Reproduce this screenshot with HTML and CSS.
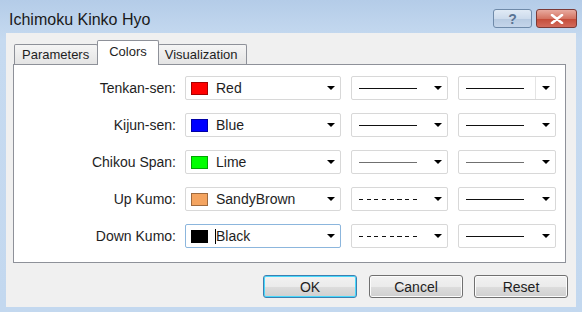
FILE: index.html
```html
<!DOCTYPE html>
<html lang="en">
<head>
  <meta charset="UTF-8">
  <title>Ichimoku Kinko Hyo</title>
  <link rel="stylesheet" href="styles.css">
</head>
<body>
  <div class="window">
    <div class="titlebar">
      <span class="title">Ichimoku Kinko Hyo</span>
      <div class="caption-btns">
        <span class="cap-btn help">?</span>
        <span class="cap-btn close">
          <svg width="14" height="10" viewBox="0 0 14 10"><path d="M2 1 L12 9 M12 1 L2 9" stroke="#fff" stroke-width="2.6" stroke-linecap="round"/></svg>
        </span>
      </div>
    </div>

    <div class="client">
      <div class="tabs">
        <div class="tab">Parameters</div>
        <div class="tab active">Colors</div>
        <div class="tab">Visualization</div>
      </div>

      <div class="panel">
        <div class="row">
          <label>Tenkan-sen:</label>
          <div class="combo"><span class="swatch red"></span><span class="name">Red</span><span class="arrow"></span></div>
          <div class="combo"><span class="line"></span><span class="arrow"></span></div>
          <div class="combo"><span class="line"></span><span class="arrow split"></span></div>
        </div>
        <div class="row">
          <label>Kijun-sen:</label>
          <div class="combo"><span class="swatch blue"></span><span class="name">Blue</span><span class="arrow"></span></div>
          <div class="combo"><span class="line"></span><span class="arrow"></span></div>
          <div class="combo"><span class="line"></span><span class="arrow"></span></div>
        </div>
        <div class="row">
          <label>Chikou Span:</label>
          <div class="combo"><span class="swatch lime"></span><span class="name">Lime</span><span class="arrow"></span></div>
          <div class="combo"><span class="line grey"></span><span class="arrow"></span></div>
          <div class="combo"><span class="line grey"></span><span class="arrow"></span></div>
        </div>
        <div class="row">
          <label>Up Kumo:</label>
          <div class="combo"><span class="swatch sandy"></span><span class="name">SandyBrown</span><span class="arrow"></span></div>
          <div class="combo"><span class="line dashed"></span><span class="arrow"></span></div>
          <div class="combo"><span class="line"></span><span class="arrow"></span></div>
        </div>
        <div class="row">
          <label>Down Kumo:</label>
          <div class="combo focused"><span class="swatch black"></span><span class="name"><span class="caret"></span>Black</span><span class="arrow"></span></div>
          <div class="combo"><span class="line dashed"></span><span class="arrow"></span></div>
          <div class="combo"><span class="line"></span><span class="arrow"></span></div>
        </div>
      </div>

      <div class="buttons">
        <button class="btn default">OK</button>
        <button class="btn">Cancel</button>
        <button class="btn">Reset</button>
      </div>
    </div>
  </div>
</body>
</html>
```

FILE: styles.css
```css
body {
  margin: 0;
  font-family: "Liberation Sans", Arial, sans-serif;
  font-size: 14px;
  color: #1e1e1e;
}

.window {
  width: 582px;
  height: 312px;
  box-sizing: border-box;
  padding: 0 6px 5px 6px;
  background: linear-gradient(#b4cce8, #c6daf0 40px, #c3d8ef);
}

.titlebar {
  height: 33px;
  display: flex;
  align-items: flex-start;
  justify-content: space-between;
}

.title {
  margin: 11px 0 0 3px;
  font-size: 16px;
  color: #1a1a1a;
}

.caption-btns {
  display: flex;
  gap: 4px;
  margin: 9px -1px 0 0;
}

.cap-btn {
  height: 19px;
  box-sizing: border-box;
  border: 1px solid #6f8aa9;
  border-radius: 3px;
  display: flex;
  align-items: center;
  justify-content: center;
}

.help {
  width: 39px;
  background: linear-gradient(#e0eaf5, #cddbec 50%, #b7cae1 51%, #c4d5ea);
  color: #5a7494;
  font-weight: bold;
  font-size: 14px;
}

.close {
  width: 41px;
  border-color: #7c3a36;
  background: linear-gradient(#e8aa9f, #d47462 50%, #c44b37 51%, #d36b5c);
}

.client {
  height: 274px;
  box-sizing: border-box;
  background: #f0f0f0;
  padding: 7px 8px 9px 7px;
}

.tabs {
  display: flex;
  align-items: flex-end;
  height: 24px;
  padding-left: 1px;
  font-size: 13px;
}

.tab {
  height: 20px;
  box-sizing: border-box;
  padding: 2px 8px 0 7px;
  border: 1px solid #8e9199;
  border-bottom: none;
  border-radius: 2px 2px 0 0;
  background: linear-gradient(#f5f5f5, #e4e4e4);
  color: #1e1e1e;
}

.tab + .tab {
  border-left: none;
}

.tab.active {
  height: 25px;
  margin: 0 -1px -1px -1px;
  padding: 3px 11px 0 11px;
  background: #fff;
  border-left: 1px solid #8e9199;
  position: relative;
}

.tab.active + .tab {
  border-left: none;
}

.panel {
  width: 553px;
  height: 199px;
  box-sizing: border-box;
  background: #fff;
  border: 1px solid #8e9199;
  padding: 11px 0 0 0;
  display: grid;
  grid-auto-rows: 24px;
  row-gap: 13px;
}

.row {
  display: grid;
  grid-template-columns: 161px 156px 97px 98px;
  column-gap: 10px;
  align-items: center;
}

.row label {
  text-align: right;
  margin-right: -1px;
}

.combo {
  height: 24px;
  box-sizing: border-box;
  border: 1px solid #d8d8d8;
  border-radius: 2px;
  display: flex;
  align-items: center;
  padding: 0 0 0 5px;
}

.combo.focused {
  border-color: #8cb6dd;
}

.swatch {
  width: 17px;
  height: 13px;
  box-sizing: border-box;
  border: 1px solid rgba(0, 0, 0, 0.35);
  flex: none;
}

.red { background: #ff0000; }
.blue { background: #0000ff; }
.lime { background: #00ff00; }
.sandy { background: #f4a460; }
.black { background: #000; }

.name {
  margin-left: 8px;
  flex: 1;
  position: relative;
}

.caret {
  position: absolute;
  left: -1px;
  top: 1px;
  width: 1px;
  height: 15px;
  background: #000;
}

.line {
  margin-left: 2px;
  width: 58px;
  height: 1px;
  background: #111;
  flex: none;
}

.line.grey {
  background: #707070;
}

.line.dashed {
  background: repeating-linear-gradient(to right, #111 0 4px, transparent 4px 7.7px);
}

.arrow {
  margin-left: auto;
  width: 19px;
  height: 22px;
  display: flex;
  align-items: center;
  justify-content: center;
}

.arrow::after {
  content: "";
  border-left: 4px solid transparent;
  border-right: 4px solid transparent;
  border-top: 4px solid #000;
}

.arrow.split {
  border-left: 1px solid #e4e4e4;
}

.buttons {
  display: flex;
  justify-content: flex-end;
  gap: 11px;
  margin-top: 12px;
}

.btn {
  width: 94px;
  height: 23px;
  font-family: "Liberation Sans", Arial, sans-serif;
  font-size: 14px;
  color: #1e1e1e;
  border: 1px solid #707070;
  border-radius: 3px;
  background: linear-gradient(#f2f2f2, #ebebeb 50%, #dddddd 51%, #cfcfcf);
  box-shadow: inset 0 0 0 1px #fcfcfc;
  padding: 0;
}

.btn.default {
  border-color: #3c7fb1;
  box-shadow: inset 0 0 0 1px #48d8fb;
  margin-right: 1px;
}
```
